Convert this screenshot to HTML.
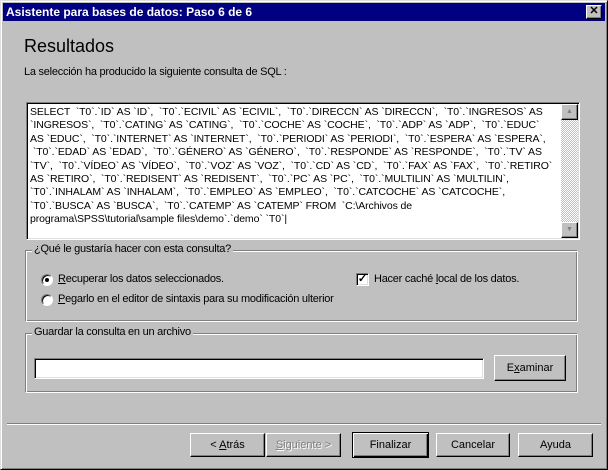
<!DOCTYPE html>
<html><head><meta charset="utf-8"><style>
*{margin:0;padding:0;box-sizing:border-box}
body{width:608px;height:470px;background:#c0c0c0;position:relative;overflow:hidden;font-family:"Liberation Sans",sans-serif;font-size:11px;color:#000}
.abs{position:absolute}
.win{left:0;top:0;width:608px;height:470px;border:1px solid;border-color:#dfdfdf #000 #000 #dfdfdf;box-shadow:inset 1px 1px #fff,inset -1px -1px #808080}
.title{left:3px;top:3px;width:602px;height:18px;background:#000080;color:#fff;font-weight:bold;font-size:12px;line-height:18px;padding-left:3px}
.close{left:586px;top:5px;width:16px;height:14px;background:#c0c0c0;border:1px solid;border-color:#fff #000 #000 #fff;box-shadow:inset -1px -1px #808080;font-size:11px;line-height:11px;text-align:center;font-weight:bold;color:#000}
.sunk{border:1px solid;border-color:#808080 #fff #fff #808080;box-shadow:inset 1px 1px #000,inset -1px -1px #dfdfdf}
.grp{border:1px solid;border-color:#808080 #fff #fff #808080;box-shadow:inset 1px 1px #fff,inset -1px -1px #808080}
.leg{background:#c0c0c0;padding:0 2px}
.btn{height:24px;border:1px solid;border-color:#fff #000 #000 #fff;box-shadow:inset -1px -1px #808080;text-align:center;line-height:22px;font-size:11px}
.sql{letter-spacing:-0.1px;white-space:nowrap;line-height:13.4px;font-size:10.5px}
.lbl{letter-spacing:-0.25px}
</style></head><body>
<div class="abs win"></div>
<div class="abs title">Asistente para bases de datos: Paso 6 de 6</div>
<div class="abs close">✕</div>
<div class="abs" style="left:24px;top:36px;font-size:18px">Resultados</div>
<div class="abs lbl" style="left:24px;top:66px">La selección ha producido la siguiente consulta de SQL :</div>

<div class="abs sunk" style="left:26px;top:102px;width:554px;height:138px;background:#fff"></div>
<div class="abs sql" style="left:30px;top:106px">SELECT &nbsp;`T0`.`ID` AS `ID`, &nbsp;`T0`.`ECIVIL` AS `ECIVIL`, &nbsp;`T0`.`DIRECCN` AS `DIRECCN`, &nbsp;`T0`.`INGRESOS` AS<br>`INGRESOS`, &nbsp;`T0`.`CATING` AS `CATING`, &nbsp;`T0`.`COCHE` AS `COCHE`, &nbsp;`T0`.`ADP` AS `ADP`, &nbsp;`T0`.`EDUC`<br>AS `EDUC`, &nbsp;`T0`.`INTERNET` AS `INTERNET`, &nbsp;`T0`.`PERIODI` AS `PERIODI`, &nbsp;`T0`.`ESPERA` AS `ESPERA`,<br>&nbsp;`T0`.`EDAD` AS `EDAD`, &nbsp;`T0`.`GÉNERO` AS `GÉNERO`, &nbsp;`T0`.`RESPONDE` AS `RESPONDE`, &nbsp;`T0`.`TV` AS<br>`TV`, &nbsp;`T0`.`VÍDEO` AS `VÍDEO`, &nbsp;`T0`.`VOZ` AS `VOZ`, &nbsp;`T0`.`CD` AS `CD`, &nbsp;`T0`.`FAX` AS `FAX`, &nbsp;`T0`.`RETIRO`<br>AS `RETIRO`, &nbsp;`T0`.`REDISENT` AS `REDISENT`, &nbsp;`T0`.`PC` AS `PC`, &nbsp;`T0`.`MULTILIN` AS `MULTILIN`,<br>`T0`.`INHALAM` AS `INHALAM`, &nbsp;`T0`.`EMPLEO` AS `EMPLEO`, &nbsp;`T0`.`CATCOCHE` AS `CATCOCHE`,<br>`T0`.`BUSCA` AS `BUSCA`, &nbsp;`T0`.`CATEMP` AS `CATEMP` FROM &nbsp;`C:\Archivos de<br>programa\SPSS\tutorial\sample files\demo`.`demo` `T0`|</div>
<div class="abs" style="left:561px;top:104px;width:17px;height:134px;background:repeating-conic-gradient(#fff 0 25%,#c0c0c0 0 50%) 0 0/2px 2px"></div>
<div class="abs btn" style="left:561px;top:104px;width:17px;height:16px;background:#c0c0c0;font-size:7px;line-height:14px;color:#808080">▲</div>
<div class="abs btn" style="left:561px;top:222px;width:17px;height:16px;background:#c0c0c0;font-size:7px;line-height:14px;color:#808080">▼</div>

<div class="abs grp" style="left:25px;top:250px;width:553px;height:72px"></div>
<div class="abs leg lbl" style="left:32px;top:243px">¿Qué le gustaría hacer con esta consulta?</div>
<div class="abs" style="left:41px;top:274px;width:12px;height:12px;border-radius:50%;background:#fff;border:1px solid;border-color:#808080 #fff #fff #808080;box-shadow:inset 1px 1px #000"><div style="position:absolute;left:3px;top:3px;width:4px;height:4px;background:#000;border-radius:50%"></div></div>
<div class="abs lbl" style="left:58px;top:273px"><u>R</u>ecuperar los datos seleccionados.</div>
<div class="abs" style="left:41px;top:294px;width:12px;height:12px;border-radius:50%;background:#fff;border:1px solid;border-color:#808080 #fff #fff #808080;box-shadow:inset 1px 1px #000"></div>
<div class="abs lbl" style="left:58px;top:293px"><u>P</u>egarlo en el editor de sintaxis para su modificación ulterior</div>
<div class="abs sunk" style="left:356px;top:273px;width:13px;height:13px;background:#fff;font-size:11px;line-height:11px;text-align:center;font-weight:bold">✓</div>
<div class="abs lbl" style="left:374px;top:273px">Hacer caché <u>l</u>ocal de los datos.</div>

<div class="abs grp" style="left:25px;top:333px;width:553px;height:60px"></div>
<div class="abs leg lbl" style="left:32px;top:326px">Guardar la consulta en un archivo</div>
<div class="abs sunk" style="left:34px;top:358px;width:450px;height:21px;background:#fff"></div>
<div class="abs btn" style="left:494px;top:355px;width:72px;height:26px;line-height:24px">E<u>x</u>aminar</div>

<div class="abs" style="left:7px;top:423px;width:594px;height:2px;border-top:1px solid #808080;border-bottom:1px solid #fff"></div>
<div class="abs btn" style="left:190px;top:433px;width:75px">&lt; <u>A</u>trás</div>
<div class="abs btn" style="left:266px;top:433px;width:75px;color:#808080;text-shadow:1px 1px #fff"><u>S</u>iguiente &gt;</div>
<div class="abs btn" style="left:352px;top:432px;width:77px;height:26px;border:1px solid #000;box-shadow:inset 1px 1px #fff,inset -1px -1px #000,inset -2px -2px #808080;line-height:24px">Finalizar</div>
<div class="abs btn" style="left:436px;top:433px;width:74px">Cancelar</div>
<div class="abs btn" style="left:518px;top:433px;width:75px">Ayuda</div>
</body></html>
